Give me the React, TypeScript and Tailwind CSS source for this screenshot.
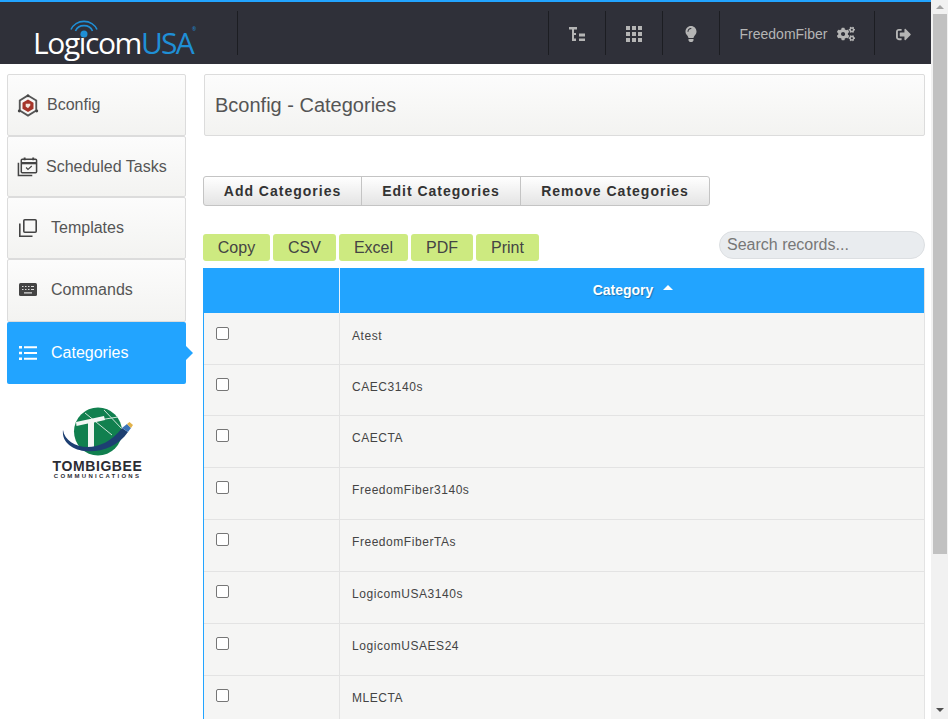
import React from "react";
import { FaCogs, FaLightbulb, FaSignOutAlt } from "react-icons/fa";

const sidebarItems = [
  { label: "Bconfig", cls: "h-[62px] pl-[9px] gap-[8px]", icon: "hex" },
  { label: "Scheduled Tasks", cls: "h-[61px] pl-[9px] gap-[8px]", icon: "cal" },
  { label: "Templates", cls: "h-[62px] pl-[11px] gap-[14px]", icon: "copy" },
  { label: "Commands", cls: "h-[63px] pl-[11px] pb-[2px] gap-[14px]", icon: "kbd" },
];

function SideIcon({ name }: { name: string }) {
  if (name === "hex")
    return (
      <svg width="22" height="25" viewBox="0 0 24 26">
        <path d="M12 2 L21 7.500 V18.500 L12 24 L3 18.500 V7.500 Z" fill="none" stroke="#555" strokeWidth="2" />
        <circle cx="12" cy="2.500" r="1.500" fill="#444" />
        <circle cx="2.500" cy="19" r="1.600" fill="#444" />
        <circle cx="21.500" cy="19" r="1.600" fill="#444" />
        <path d="M12 6.500 L18 10 V16.500 L12 20 L6 16.500 V10 Z" fill="#a5352a" />
        <path d="M9.500 11 H14.500 V13 L12 16 L9.500 14 Z" fill="#f3e6dc" />
      </svg>
    );
  if (name === "cal")
    return (
      <svg width="21" height="21" viewBox="0 0 22 22" fill="none" stroke="#444" strokeWidth="1.600">
        <rect x="4.500" y="3.500" width="16" height="14" rx="1" />
        <path d="M4.500 7.500H20.500" strokeWidth="2.400" />
        <path d="M8 1.500V4.500M17 1.500V4.500" strokeWidth="2" />
        <path d="M1.500 7V20.500H16" />
        <path d="M9.500 12l2 2 4-3.500" strokeWidth="1.300" />
      </svg>
    );
  if (name === "copy")
    return (
      <svg width="18" height="18" viewBox="0 0 18 18" fill="none" stroke="#444" strokeWidth="1.600">
        <rect x="4.800" y="0.800" width="12.400" height="12.400" rx="1" />
        <path d="M0.800 4.500V17.200H13.500" />
      </svg>
    );
  return (
    <svg width="18" height="13" viewBox="0 0 18 13">
      <rect x="0" y="0" width="18" height="13" rx="1.500" fill="#444" />
      <path d="M3 3.500h1.500M6 3.500h1.500M9 3.500h1.500M12 3.500h3M3 6.500h1.500M6 6.500h1.500M9 6.500h1.500M12 6.500h3M5 9.800h8" stroke="#ddd" strokeWidth="1.200" />
    </svg>
  );
}

function NavCell({ w, children }: { w: string; children: React.ReactNode }) {
  return (
    <div className={`${w} h-[44px] pt-[2px] border-l border-[#1c1d22] flex items-center justify-center`}>{children}</div>
  );
}

const rows: [string, string, string][] = [
  ["Atest", "h-[52px] pt-[14px]", "pb-[5px]"],
  ["CAEC3140s", "h-[51px] pt-[13px]", "pb-[6px]"],
  ["CAECTA", "h-[52px] pt-[13px]", "pb-[8px]"],
  ["FreedomFiber3140s", "h-[52px] pt-[13px]", "pb-[8px]"],
  ["FreedomFiberTAs", "h-[52px] pt-[13px]", "pb-[8px]"],
  ["LogicomUSA3140s", "h-[52px] pt-[13px]", "pb-[8px]"],
  ["LogicomUSAES24", "h-[52px] pt-[13px]", "pb-[8px]"],
  ["MLECTA", "h-[52px] pt-[13px]", "pb-[8px]"],
];

export default function App() {
  return (
    <div className="w-[948px] h-[719px] overflow-hidden flex bg-white font-['Liberation_Sans',Arial,sans-serif]">
      <div className="w-[931px] flex flex-col shrink-0">
        <header className="h-[64px] shrink-0 bg-[#2f3039] border-t-2 border-[#22a4ff] flex items-center">
          <div className="w-[238px] h-[44px] shrink-0 border-r border-[#1c1d22] pl-[33px] relative">
            <svg className="absolute left-[69px] top-[5px]" width="30" height="24" viewBox="0 0 30 24" fill="none" stroke="#1f8fd6" strokeWidth="1.600">
              <path d="M2 13.500A14 13 0 0 1 28 13.500" />
              <path d="M6.500 15A9 8 0 0 1 23.500 15" />
              <circle cx="15" cy="18" r="3.500" fill="#1f8fd6" stroke="none" />
            </svg>
            <div className="mt-[12px] text-[30px] leading-[40px] tracking-[-1.400px] font-normal font-['Open_Sans',sans-serif] text-white whitespace-nowrap">
              Logicom<span className="text-[#1f8fd6] tracking-[-1.800px]">USA</span>
              <span className="absolute left-[192px] top-[16px] text-[5px] leading-[5px] tracking-normal text-[#1f8fd6]">®</span>
            </div>
          </div>
          <div className="flex-1" />
          <NavCell w="w-[57px]">
            <svg width="16" height="14" viewBox="0 0 16 14" fill="#b5b5b5">
              <path d="M0 0h8v2.500H0zM3 2.500h2v11.500H3zM5 6h2v2H5zM5 11.500h2v2.500H5zM10 6.500h6v3h-6zM10 11.500h6v2.500h-6z" />
            </svg>
          </NavCell>
          <NavCell w="w-[57px]">
            <svg width="16" height="16" viewBox="0 0 16 16" fill="#b5b5b5">
              <path d="M0 0h4v4H0zM6 0h4v4H6zM12 0h4v4h-4zM0 6h4v4H0zM6 6h4v4H6zM12 6h4v4h-4zM0 12h4v4H0zM6 12h4v4H6zM12 12h4v4h-4z" />
            </svg>
          </NavCell>
          <NavCell w="w-[57px]">
            <FaLightbulb className="text-[#b5b5b5]" size={16} />
          </NavCell>
          <NavCell w="w-[155px]">
            <div className="pl-[1px] flex items-center">
              <span className="text-[14px] text-[#b5b5b5] mr-[10px]">FreedomFiber</span>
              <FaCogs className="text-[#b5b5b5]" size={18} />
            </div>
          </NavCell>
          <NavCell w="w-[57px]">
            <FaSignOutAlt className="text-[#b5b5b5]" size={15} />
          </NavCell>
        </header>

        <div className="flex-1 flex pt-[10px] min-h-0">
          <aside className="w-[179px] ml-[7px] shrink-0 flex flex-col">
            {sidebarItems.map((it) => (
              <div
                key={it.label}
                className={`${it.cls} shrink-0 flex items-center border border-[#dcdcdc] rounded-[2px] bg-gradient-to-b from-[#fcfcfc] to-[#f3f3f1] text-[16px] text-[#555]`}
              >
                <SideIcon name={it.icon} />
                <span>{it.label}</span>
              </div>
            ))}
            <div className="relative h-[62px] shrink-0 flex items-center pl-[12px] gap-[14px] bg-[#22a4ff] rounded-[2px] text-[16px] text-white">
              <svg width="18" height="14" viewBox="0 0 18 14" fill="#fff">
                <path d="M0 0h3v2.500H0zM5 .3h13v2H5zM0 5.800h3v2.500H0zM5 6h13v2H5zM0 11.500h3V14H0zM5 11.700h13v2H5z" />
              </svg>
              <span>Categories</span>
              <div className="absolute right-[-7px] top-[24px] w-0 h-0 border-y-[7px] border-y-transparent border-l-[7px] border-l-[#22a4ff]" />
            </div>
            <div className="flex flex-col items-center mt-[23px] ml-[2px]">
              <svg width="80" height="50" viewBox="0 0 80 50">
                <circle cx="40" cy="24.500" r="24" fill="#11804f" />
                <path d="M22 16L60 10M27 6L54 28M46 3L64 22" stroke="#cfe5d8" strokeWidth="1" fill="none" />
                <path d="M18 15L46 9L47 13L36 15.500V40H30V16.500L18.500 19Z" fill="#f4f6f4" />
                <path d="M5 23C8 42 42 50 64 21L70 25C50 54 2 48 5 23Z" fill="#1d3f72" />
                <path d="M64 21L69 17L73 21L70 25Z" fill="#3b72b5" />
                <path d="M69 17L71.500 15L75 18L73 21Z" fill="#e2b24a" />
              </svg>
              <div className="mt-[2px] text-[14px] leading-[15px] font-bold tracking-[0.6px] text-[#2c2c33] whitespace-nowrap">TOMBIGBEE</div>
              <div className="-mt-px text-[6px] leading-[7px] font-bold tracking-[2.250px] text-[#2c2c33] whitespace-nowrap">COMMUNICATIONS</div>
            </div>
          </aside>

          <main className="w-[721px] ml-[18px] shrink-0 flex flex-col">
            <div className="h-[62px] shrink-0 flex items-center pl-[10px] border border-[#dcdcdc] rounded-[2px] bg-gradient-to-b from-[#fcfcfc] to-[#f3f3f1] text-[20px] text-[#555]">
              Bconfig - Categories
            </div>
            <div className="mt-[40px] -ml-px flex h-[30px] w-[507px] shrink-0 border border-[#c4c4c4] rounded-[3px] bg-gradient-to-b from-white to-[#e4e4e4] text-[14px] font-bold tracking-[1px] text-[#333]">
              <div className="w-[158px] flex items-center justify-center border-r border-[#c4c4c4]">Add Categories</div>
              <div className="w-[159px] flex items-center justify-center border-r border-[#c4c4c4]">Edit Categories</div>
              <div className="flex-1 flex items-center justify-center">Remove Categories</div>
            </div>
            <div className="mt-[25px] h-[37px] shrink-0 flex items-start -ml-px">
              <div className="flex gap-[3px] mt-[3px]">
                {[
                  ["Copy", "w-[67px]"],
                  ["CSV", "w-[63px]"],
                  ["Excel", "w-[69px]"],
                  ["PDF", "w-[62px]"],
                  ["Print", "w-[63px]"],
                ].map(([t, w]) => (
                  <div key={t} className={`${w} h-[27px] flex items-center justify-center rounded-[3px] bg-[#cdea80] text-[16px] text-[#444]`}>
                    {t}
                  </div>
                ))}
              </div>
              <input
                readOnly
                placeholder="Search records..."
                className="ml-auto w-[206px] h-[28px] rounded-full border border-[#dcdfe2] bg-[#e9ecef] px-[7px] text-[16px] outline-none placeholder:text-[#777]"
              />
            </div>
            <div className="-ml-px border-l border-l-[#22a4ff] border-r border-r-[#e3e3e3] flex-1 min-h-0 overflow-hidden">
              <div className="flex h-[45px] bg-[#22a4ff]">
                <div className="w-[136px] border-r border-[#e5f3ff]" />
                <div className="flex-1 flex items-center justify-center pl-[2px] text-[14px] font-bold text-white [text-shadow:1px_1px_1px_rgba(0,0,0,0.3)]">
                  <span>Category</span>
                  <span className="ml-[10px] mb-[7px] w-0 h-0 border-x-[5px] border-x-transparent border-b-[5px] border-b-white" />
                </div>
              </div>
              {rows.map(([name, h, pb]) => {
                const [height, pt] = h.split(" ");
                return (
                  <div key={name} className={`flex ${height} shrink-0 bg-[#f5f5f4] border-b border-[#e3e3e3]`}>
                    <div className={`w-[136px] border-r border-[#e3e3e3] pl-[12px] ${pt}`}>
                      <input type="checkbox" readOnly className="block w-[13px] h-[13px] appearance-none bg-white border border-[#767676] rounded-[2px]" />
                    </div>
                    <div className={`flex-1 flex items-center pl-[12px] text-[12px] tracking-[0.55px] text-[#444] ${pb}`}>{name}</div>
                  </div>
                );
              })}
            </div>
          </main>
        </div>
      </div>

      <div className="w-[17px] shrink-0 bg-[#f1f1f1] flex flex-col">
        <div className="h-[14px] shrink-0 flex items-center justify-center">
          <div className="w-0 h-0 border-x-[4px] border-x-transparent border-b-[4px] border-b-[#a3a3a3]" />
        </div>
        <div className="ml-[2px] w-[14px] h-[540px] bg-[#c1c1c1]" />
        <div className="flex-1" />
        <div className="h-[18px] shrink-0 flex items-center justify-center">
          <div className="w-0 h-0 border-x-[4px] border-x-transparent border-t-[4px] border-t-[#505050]" />
        </div>
      </div>
    </div>
  );
}
